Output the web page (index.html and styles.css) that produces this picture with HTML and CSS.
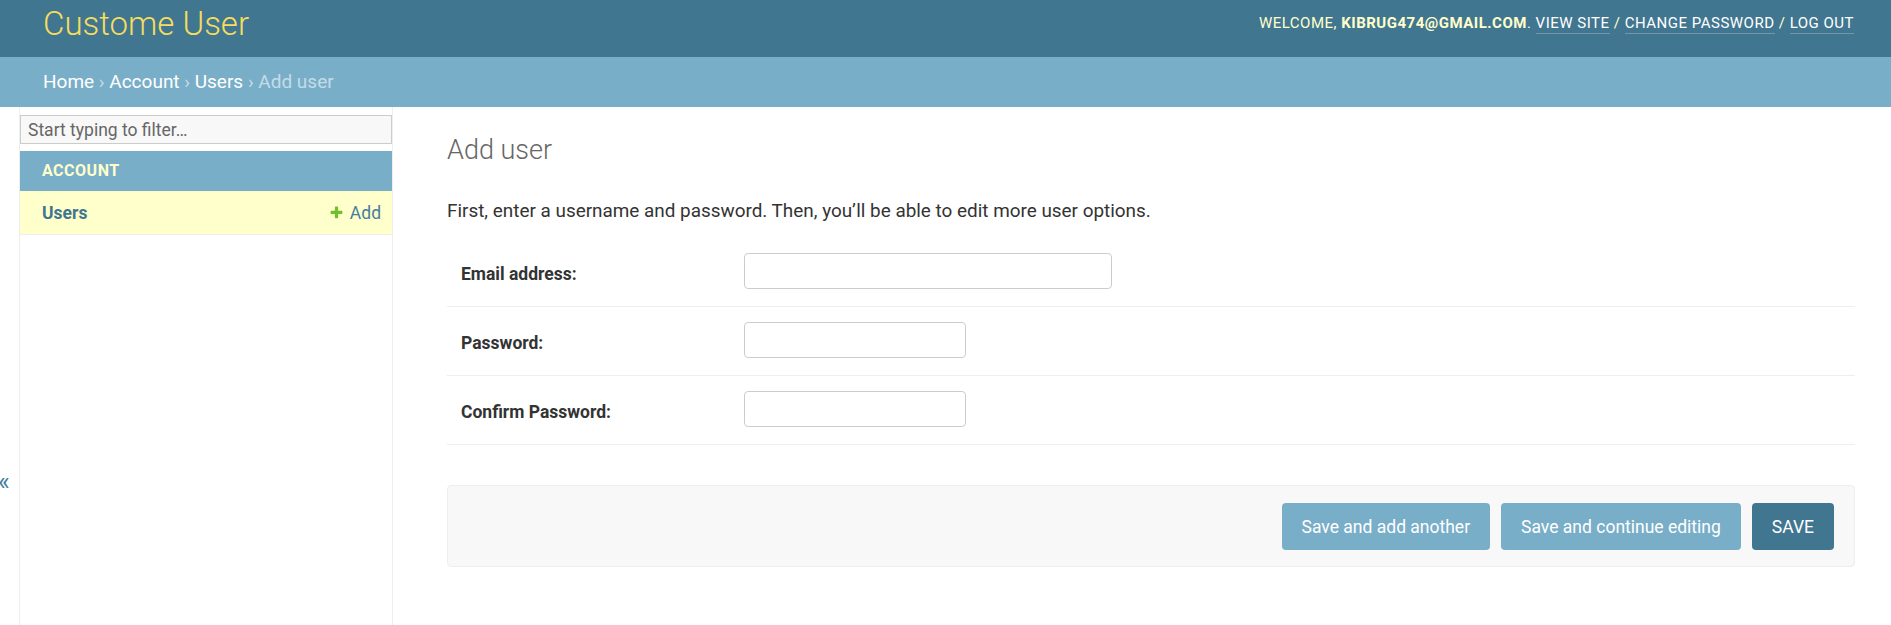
FILE: index.html
```html
<!DOCTYPE html>
<html lang="en">
<head>
<meta charset="utf-8">
<title>Add user | Custome User</title>
<link rel="stylesheet" href="styles.css">
</head>
<body>
<div class="header">
  <div class="branding"><h1 class="site-name"><a href="#">Custome User</a></h1></div>
  <div class="user-tools">Welcome, <strong>kibrug474@gmail.com</strong>. <a href="#">View site</a> / <a href="#">Change password</a> / <a href="#">Log out</a></div>
</div>
<div class="breadcrumbs"><a href="#">Home</a> › <a href="#">Account</a> › <a href="#">Users</a> › Add user</div>
<div class="main">
  <button class="toggle-nav" type="button">«</button>
  <nav class="sidebar">
    <input class="nav-filter" type="search" placeholder="Start typing to filter…">
    <div class="app-caption">Account</div>
    <div class="model-row">
      <a class="model-link" href="#">Users</a>
      <a class="add-link" href="#"><svg class="add-icon" viewBox="0 0 1792 1792" width="15" height="15"><path fill="#70bf2b" d="M1600 796v192q0 40-28 68t-68 28h-416v416q0 40-28 68t-68 28h-192q-40 0-68-28t-28-68v-416h-416q-40 0-68-28t-28-68v-192q0-40 28-68t68-28h416v-416q0-40 28-68t68-28h192q40 0 68 28t28 68v416h416q40 0 68 28t28 68z"/></svg>Add</a>
    </div>
  </nav>
  <div class="content">
    <h1 class="title">Add user</h1>
    <p class="intro">First, enter a username and password. Then, you’ll be able to edit more user options.</p>
    <div class="form-row">
      <label class="field-label" for="email">Email address:</label>
      <input class="field-input wide" id="email" type="email">
    </div>
    <div class="form-row">
      <label class="field-label" for="pw1">Password:</label>
      <input class="field-input" id="pw1" type="password">
    </div>
    <div class="form-row">
      <label class="field-label" for="pw2">Confirm Password:</label>
      <input class="field-input" id="pw2" type="password">
    </div>
    <div class="submit-row">
      <button class="btn" type="button">Save and add another</button>
      <button class="btn" type="button">Save and continue editing</button>
      <button class="btn default" type="button">SAVE</button>
    </div>
  </div>
</div>
</body>
</html>
```
FILE: styles.css
```css
* { box-sizing: border-box; }
html, body { margin: 0; padding: 0; }
body {
  font-family: Roboto, "Liberation Sans", Arial, sans-serif;
  color: #333;
  background: #fff;
  font-size: 17.5px;
}
a { text-decoration: none; }

.header {
  display: flex;
  justify-content: space-between;
  align-items: flex-start;
  height: 57px;
  padding: 0 37px 0 43px;
  background: #417690;
  color: #ffc;
}
.site-name {
  margin: 0;
  font-size: 33px;
  font-weight: 300;
  line-height: 48px;
}
.site-name a { color: #f5dd5d; }
.user-tools {
  padding-top: 13px;
  font-size: 15px;
  line-height: 20px;
  letter-spacing: 0.5px;
  text-transform: uppercase;
  color: #ffc;
}
.user-tools strong { font-weight: 700; color: #ffc; }
.user-tools a {
  color: #fff;
  padding-bottom: 1px;
  border-bottom: 1px solid rgba(255,255,255,0.25);
}

.breadcrumbs {
  height: 50px;
  padding: 0 43px;
  background: #79aec8;
  color: #c4dce8;
  font-size: 19px;
  line-height: 50px;
}
.breadcrumbs a { color: #fff; }

.main {
  display: flex;
  min-height: calc(100vh - 107px);
}
.toggle-nav {
  flex: 0 0 20px;
  display: flex;
  align-items: flex-start;
  justify-content: flex-start;
  padding: 362px 0 0 0;
  margin: 0;
  border: 0;
  border-right: 1px solid #eee;
  background: #fff;
  color: #447e9b;
  font-family: Roboto, "Liberation Sans", sans-serif;
  font-size: 25px;
  line-height: 26px;
  text-indent: -2px;
}
.sidebar {
  flex: 0 0 373px;
  border-right: 1px solid #eee;
}
.nav-filter {
  display: block;
  width: 100%;
  height: 29px;
  margin: 8px 0 7px;
  padding: 0 7px;
  border: 1px solid #ccc;
  background: #f8f8f8;
  font-family: Roboto, "Liberation Sans", sans-serif;
  font-size: 17.5px;
  color: #333;
  border-radius: 0;
  outline: none;
}
.nav-filter::placeholder { color: #666; }
.app-caption {
  height: 40px;
  padding-left: 22px;
  background: #79aec8;
  color: #ffc;
  font-size: 16px;
  font-weight: 700;
  line-height: 40px;
  letter-spacing: 0.5px;
  text-transform: uppercase;
}
.model-row {
  display: flex;
  justify-content: space-between;
  align-items: center;
  height: 44px;
  padding: 0 11px 0 22px;
  background: #ffc;
  border-bottom: 1px solid #eee;
}
.model-link { color: #417690; font-weight: 700; font-size: 17.5px; }
.add-link {
  display: flex;
  align-items: center;
  gap: 6px;
  color: #447e9b;
  font-size: 17.5px;
}
.add-icon { display: block; }

.content {
  flex: 1;
  padding: 26px 36px 0 54px;
}
.title {
  margin: 0 0 33px;
  font-size: 27px;
  font-weight: 300;
  line-height: 34px;
  color: #666;
}
.intro {
  margin: 0 0 16px;
  font-size: 18.9px;
  line-height: 22px;
  color: #333;
}
.form-row {
  display: flex;
  align-items: flex-start;
  padding: 15px 14px 17px;
  border-bottom: 1px solid #eee;
}
.field-label {
  flex: 0 0 283px;
  padding-top: 10px;
  font-weight: 700;
  font-size: 17.5px;
  line-height: 22px;
  color: #333;
}
.field-input {
  width: 222px;
  height: 36px;
  border: 1px solid #ccc;
  border-radius: 4px;
  background: #fff;
  padding: 5px 8px;
  font-size: 17.5px;
}
.field-input.wide { width: 368px; }

.submit-row {
  display: flex;
  justify-content: flex-end;
  gap: 11px;
  margin-top: 40px;
  padding: 17px 20px 16px;
  background: #f8f8f8;
  border: 1px solid #eee;
  border-radius: 4px;
}
.btn {
  height: 47px;
  padding: 0 20px;
  border: 0;
  border-radius: 4px;
  background: #79aec8;
  color: #fff;
  font-family: Roboto, "Liberation Sans", sans-serif;
  font-size: 17.5px;
}
.btn.default { background: #417690; }
```
